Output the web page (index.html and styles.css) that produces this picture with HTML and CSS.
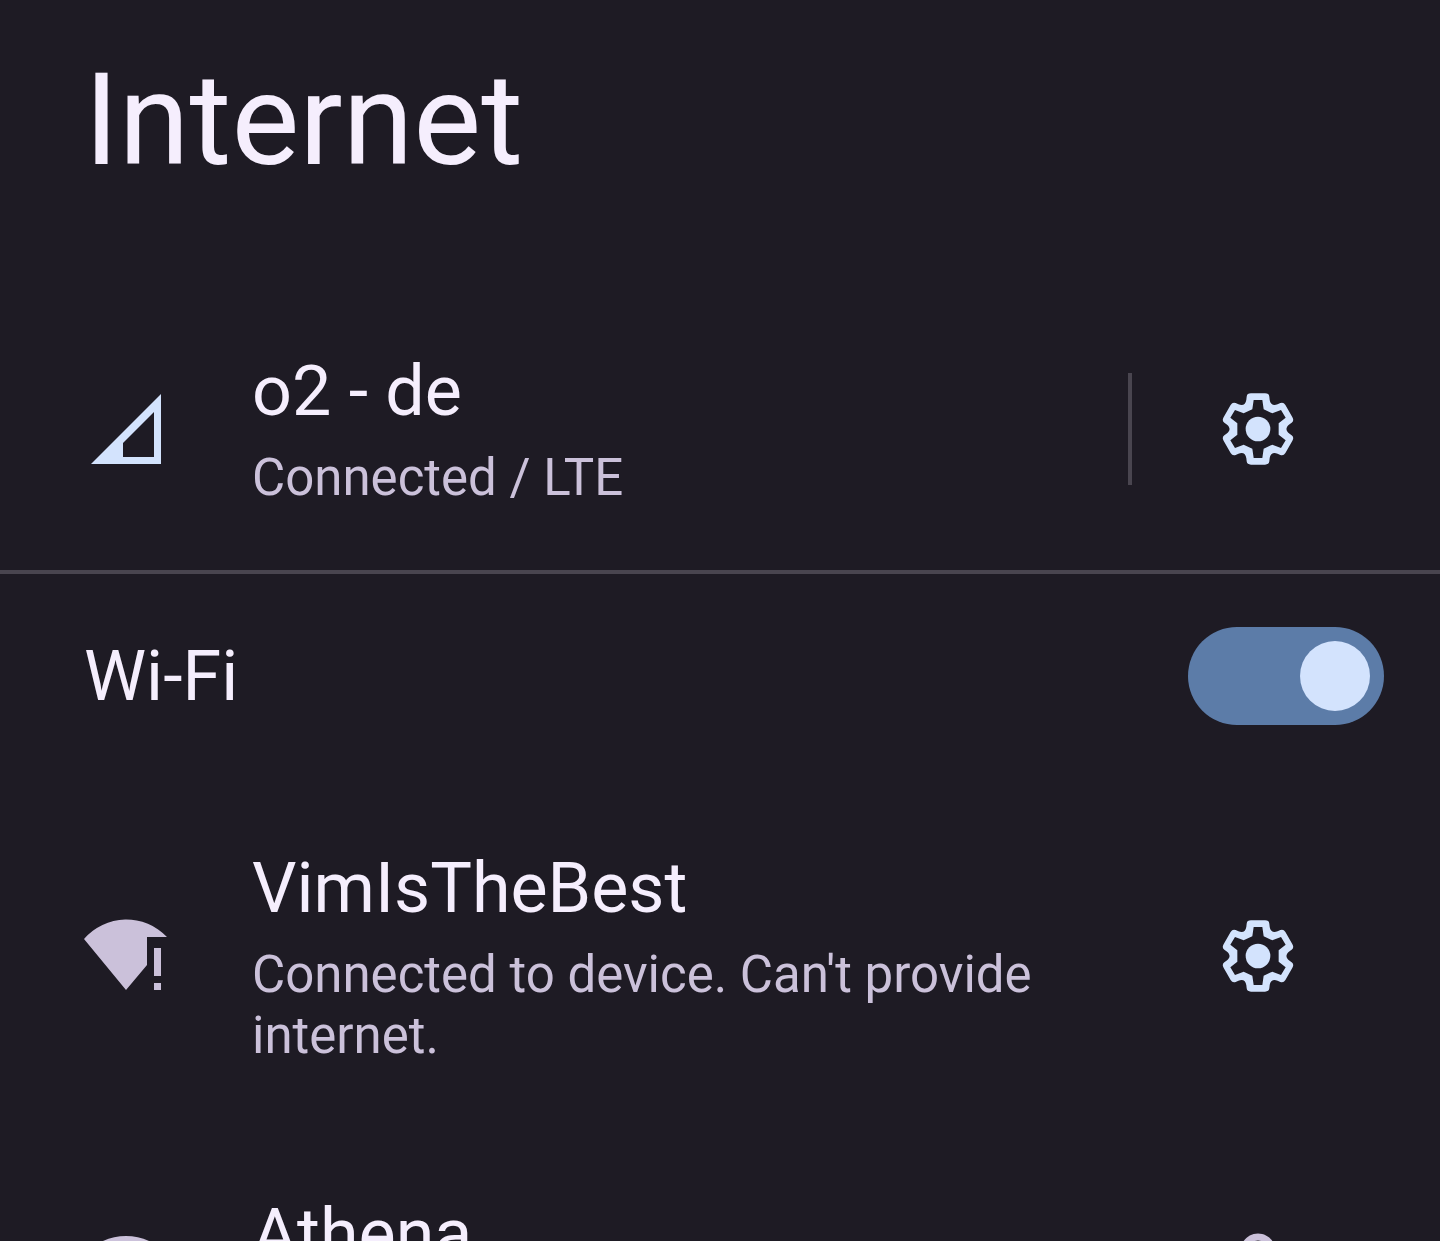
FILE: index.html
```html
<!DOCTYPE html>
<html lang="en">
<head>
<meta charset="utf-8">
<meta name="viewport" content="width=device-width, initial-scale=1">
<title>Internet</title>
<link rel="stylesheet" href="styles.css">
</head>
<body>
<svg class="sprite" aria-hidden="true">
  <symbol id="gear" viewBox="-126 -126 252 252">
    <path fill-rule="evenodd" d="M-21-107H21Q33-107 34-97L35-88C37-74 45.600-69 58.700-74.300L67-77.900Q76.200-82.100 82.200-71.700L103.200-35.300Q109.200-24.900 101-19.100L93.700-13.700C82.600-5 82.600 5 93.700 13.700L101 19.100Q109.200 24.900 103.200 35.300L82.200 71.700Q76.200 82.100 67 77.900L58.700 74.300C45.600 69 37 74 35 88L34 97Q33 107 21 107H-21Q-33 107-34 97L-35 88C-37 74-45.600 69-58.700 74.300L-67 77.900Q-76.200 82.100-82.200 71.700L-103.200 35.300Q-109.200 24.900-101 19.100L-93.700 13.700C-82.600 5-82.600-5-93.700-13.700L-101-19.100Q-109.200-24.900-103.200-35.300L-82.200-71.700Q-76.200-82.100-67-77.900L-58.700-74.300C-45.600-69-37-74-35-88L-34-97Q-33-107-21-107ZM-13-87L-17-59L-43-47L-69-57L-83-34L-62-17V17L-83 34L-69 57L-43 47L-17 59L-13 87H13L17 59L43 47L69 57L83 34L62 17V-17L83-34L69-57L43-47L17-59L13-87Z"/>
    <circle r="37"/>
  </symbol>
</svg>
<main class="panel">
  <header class="header">
    <h1 class="title">Internet</h1>
  </header>

  <section class="network mobile">
    <svg class="icon accent" viewBox="0 0 84 84" aria-hidden="true">
      <path fill-rule="evenodd" d="M7 77H77V7ZM39 70V56L70 25V70Z"/>
    </svg>
    <div class="details">
      <h2 class="name">o2 - de</h2>
      <p class="status">Connected / LTE</p>
    </div>
    <div class="action divided">
      <button class="icon-button" type="button" aria-label="Mobile network settings"><svg class="icon accent"><use href="#gear"/></svg></button>
    </div>
  </section>

  <section class="wifi">
    <label class="name" for="wifi-switch">Wi-Fi</label>
    <input class="switch" id="wifi-switch" type="checkbox" role="switch" checked>
  </section>

  <ul class="networks">
    <li class="network">
      <svg class="icon muted" viewBox="0 0 84 84" aria-hidden="true">
        <path d="M42 76L0 25A56 56 0 0 1 83 23H63V51ZM70 34H77V62H70ZM70 69H77V76H70Z"/>
      </svg>
      <div class="details">
        <h2 class="name">VimIsTheBest</h2>
        <p class="status">Connected to device. Can't provide internet.</p>
      </div>
      <div class="action">
        <button class="icon-button" type="button" aria-label="VimIsTheBest settings"><svg class="icon accent"><use href="#gear"/></svg></button>
      </div>
    </li>
    <li class="network">
      <svg class="icon muted" viewBox="0 0 84 84" aria-hidden="true">
        <path d="M42 76L0 25A56 56 0 0 1 84 25Z"/>
      </svg>
      <div class="details">
        <h2 class="name">Athena</h2>
        <p class="status"></p>
      </div>
      <div class="action">
        <svg class="icon muted" viewBox="0 0 24 24" role="img" aria-label="Secured">
          <path fill-rule="evenodd" d="M18 8h-1V6c0-2.760-2.240-5-5-5S7 3.240 7 6v2H6c-1.100 0-2 .9-2 2v10c0 1.100.9 2 2 2h12c1.100 0 2-.9 2-2V10c0-1.100-.9-2-2-2zM9 6c0-1.660 1.340-3 3-3s3 1.340 3 3v2H9V6zM6 10h12v10H6z"/>
        </svg>
      </div>
    </li>
  </ul>
</main>
</body>
</html>
```
FILE: styles.css
```css
:root {
  --surface: #1e1b24;
  --text: #f5eefd;
  --muted: #cbc1da;
  --accent: #d3e3fd;
  --track: #5c7ca8;
  --line: #49454f;
}

* {
  box-sizing: border-box;
  margin: 0;
  padding: 0;
}

body {
  background: var(--surface);
  color: var(--text);
  font-family: Roboto, sans-serif;
}

.sprite {
  display: none;
}

.panel {
  height: 100vh;
  overflow: hidden;
}

.header {
  padding: 45px 84px 91px;
}

.title {
  font-size: 128px;
  font-weight: 400;
  line-height: 150px;
}

.network {
  display: flex;
  align-items: center;
  padding: 63px 56px 63px 84px;
}

.mobile {
  padding-bottom: 62px;
  border-bottom: 4px solid var(--line);
}

.icon {
  display: block;
  flex: none;
  width: 84px;
  height: 84px;
}

.accent {
  fill: var(--accent);
}

.muted {
  fill: var(--muted);
}

.details {
  flex: 1;
  display: grid;
  gap: 14px;
  padding-left: 84px;
}

.name {
  font-size: 70px;
  font-weight: 400;
  line-height: 84px;
}

.status {
  min-height: 61px;
  color: var(--muted);
  font-size: 51px;
  line-height: 61px;
}

.action {
  display: flex;
  align-items: center;
  justify-content: center;
  flex: none;
  width: 252px;
  height: 112px;
}

.divided {
  box-shadow: -4px 0 var(--line);
}

.icon-button {
  border: 0;
  background: none;
  cursor: pointer;
}

.wifi {
  display: flex;
  align-items: center;
  justify-content: space-between;
  padding: 53px 56px 53px 84px;
}

.switch {
  appearance: none;
  display: flex;
  align-items: center;
  width: 196px;
  height: 98px;
  padding: 14px;
  border-radius: 49px;
  background: var(--line);
  cursor: pointer;
}

.switch::before {
  content: "";
  width: 70px;
  height: 70px;
  border-radius: 50%;
  background: var(--accent);
}

.switch:checked {
  justify-content: flex-end;
  background: var(--track);
}

.networks {
  padding-top: 5px;
  list-style: none;
}
```
